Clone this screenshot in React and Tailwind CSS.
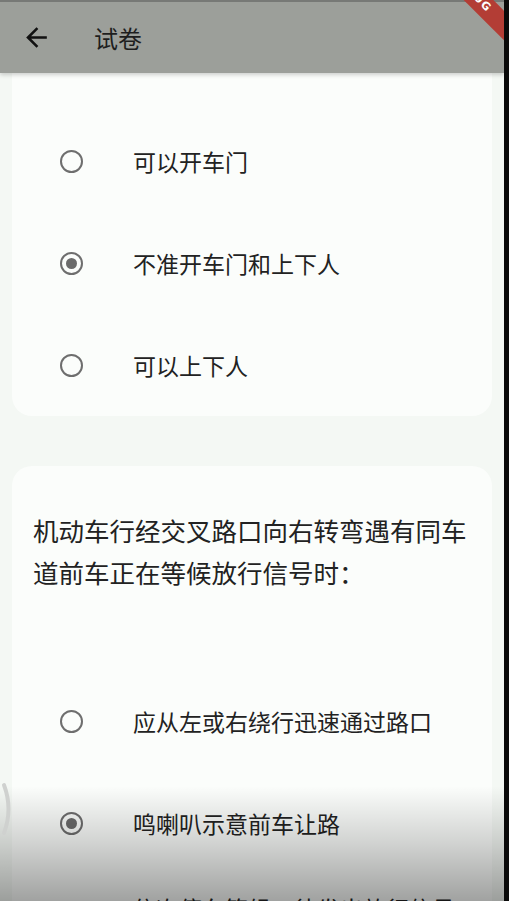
import React from "react";

const font = { fontFamily: '"Noto Sans CJK SC", "Noto Sans", sans-serif' };

function Radio({ checked }) {
  return (
    <div className="w-[23px] h-[23px] shrink-0 rounded-full border-[2.5px] border-[#6e6e6e] flex items-center justify-center">
      {checked && <div className="w-[11px] h-[11px] rounded-full bg-[#6b6b6b]" />}
    </div>
  );
}

function Option({ text, checked }) {
  return (
    <div className="min-h-[102px] flex items-center pl-[48px] pr-[20px]">
      <Radio checked={checked} />
      <div className="ml-[50px] text-[23px] leading-[34px] text-[#222]">{text}</div>
    </div>
  );
}

export default function App() {
  return (
    <div className="w-[509px] h-[901px] flex bg-black overflow-hidden relative" style={font}>
      <div className="w-[504px] h-full relative overflow-hidden bg-[#f4f8f4] flex flex-col">
        <header className="h-[73px] shrink-0 relative z-10 bg-[#9c9f9a] border-t-2 border-[#777976] flex items-center shadow-[0_2px_4px_rgba(0,0,0,0.18)]">
          <svg className="ml-[21px]" width="31" height="31" viewBox="0 0 24 24" fill="#111">
            <path d="M20 11H7.83l5.59-5.59L12 4l-8 8 8 8 1.41-1.41L7.83 13H20v-2z" />
          </svg>
          <div className="ml-[42px] text-[24px] text-[#1e1e1e] leading-none">试卷</div>
        </header>

        <div className="flex flex-col gap-[50px] px-3">
          <div className="-mt-[40px] rounded-[20px] bg-[#fbfdfb] pt-[77px]">
            <Option text="可以开车门" />
            <Option text="不准开车门和上下人" checked />
            <Option text="可以上下人" />
          </div>

          <div className="rounded-[20px] bg-[#fbfdfb] pt-[43px]">
            <div className="pl-[21px] pr-[20px] text-[25.5px] leading-[42px] text-[#222] mb-[77px]">
              机动车行经交叉路口向右转弯遇有同车道前车正在等候放行信号时：
            </div>
            <Option text="应从左或右绕行迅速通过路口" />
            <Option text="鸣喇叭示意前车让路" checked />
            <Option text="依次停车等候，待发出放行信号后再通行" />
          </div>
        </div>

        {/* debug banner */}
        <div className="absolute left-[392px] top-[-17px] w-[160px] h-[21px] rotate-45 bg-[#b33d35] z-20 flex items-center justify-center text-white text-[11px] font-bold tracking-[1px]" style={{ fontFamily: '"DejaVu Sans", sans-serif' }}>
          DEBUG
        </div>

        {/* bottom shading */}
        <div className="absolute left-0 right-0 bottom-0 h-[115px] z-20 pointer-events-none bg-linear-to-b from-transparent via-[rgba(0,0,0,0.17)] to-[rgba(0,0,0,0.36)]" />

        {/* overscroll arc */}
        <svg className="absolute left-0 top-[782px] z-30" width="16" height="54" viewBox="0 0 16 54">
          <path d="M4 3 Q13 27 4 51" stroke="#cfd1cf" strokeWidth="4" fill="none" strokeLinecap="round" />
        </svg>
      </div>
      <div className="w-[5px] h-full bg-[#0a0a0a]" />
    </div>
  );
}
